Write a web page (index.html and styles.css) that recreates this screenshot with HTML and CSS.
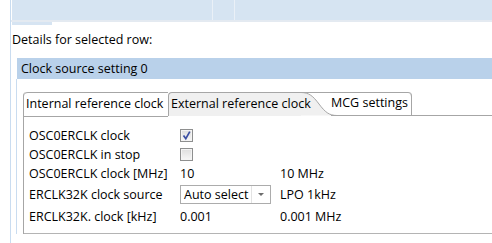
FILE: index.html
```html
<!DOCTYPE html>
<html lang="en">
<head>
    <meta charset="UTF-8">
    <title>Clock source setting</title>
    <link rel="stylesheet" href="styles.css">
</head>
<body>

    <div class="frame">
        <!-- Table rows above (cut off) -->
        <div class="grid-top">
            <div class="grid-cell wide"></div>
            <div class="grid-cell narrow"></div>
            <div class="grid-cell"></div>
        </div>
        <div class="grid-rule"></div>
        <div class="grid-thumb"></div>

        <div class="details-label">Details for selected row:</div>

        <div class="section">
            <div class="section-header">Clock source setting 0</div>

            <div class="section-body">
                <div class="tab-folder">
                    <!-- Tabs -->
                    <div class="tab-strip">
                        <div class="tab tab-first">Internal reference clock</div>
                        <div class="tab tab-hot"><span class="tab-text">External reference clock</span></div>
                        <svg class="tab-curve" width="36" height="24" viewBox="0 0 36 24">
                            <path d="M0 0.5 C8 0.5 12 4 18 12 C24 20 28 23.5 36 23.5 L0 23.5 Z" fill="#f0f0f0"/>
                            <path d="M0 0.5 C8 0.5 12 4 18 12 C24 20 28 23.5 36 23.5" fill="none" stroke="#a6a6a6"/>
                            <path d="M0 0.5 H36" fill="none" stroke="#a6a6a6"/>
                        </svg>
                        <div class="tab tab-last">MCG settings</div>
                        <div class="tab-fill"></div>
                    </div>

                    <!-- Tab content -->
                    <div class="tab-content">
                        <div class="prop-grid">
                            <div class="prop-label">OSC0ERCLK clock</div>
                            <div class="prop-value">
                                <span class="checkbox">
                                    <svg width="11" height="11" viewBox="0 0 11 11">
                                        <path d="M2.5 5.5 L4.8 8.6 L8.8 1.6" fill="none" stroke="#3b4fa3" stroke-width="1.7"/>
                                    </svg>
                                </span>
                            </div>
                            <div class="prop-unit"></div>

                            <div class="prop-label">OSC0ERCLK in stop</div>
                            <div class="prop-value"><span class="checkbox"></span></div>
                            <div class="prop-unit"></div>

                            <div class="prop-label">OSC0ERCLK clock [MHz]</div>
                            <div class="prop-value">10</div>
                            <div class="prop-unit">10 MHz</div>

                            <div class="prop-label">ERCLK32K clock source</div>
                            <div class="prop-value">
                                <div class="combo">
                                    <span class="combo-text">Auto select</span>
                                    <span class="combo-button"><span class="combo-arrow"></span></span>
                                </div>
                            </div>
                            <div class="prop-unit">LPO 1kHz</div>

                            <div class="prop-label">ERCLK32K. clock [kHz]</div>
                            <div class="prop-value">0.001</div>
                            <div class="prop-unit">0.001 MHz</div>
                        </div>
                    </div>
                </div>
            </div>
        </div>
    </div>

</body>
</html>
```

FILE: styles.css
```css
/* General Styling */
body {
    margin: 0;
    background-color: #ffffff;
    font-family: "Open Sans", "Noto Sans", sans-serif;
    font-size: 12.5px;
    color: #000000;
    overflow: hidden;
}

.frame {
    margin-left: 10px;
    height: 243px;
    border-left: 1px solid #c9dcf0;
}

/* Table remains at the top */
.grid-top {
    display: flex;
    height: 20px;
    margin-left: 1px;
    background-color: #d6e4f2;
}

.grid-cell {
    flex: 1;
}

.grid-cell.wide {
    flex: 0 0 200px;
    border-right: 1px solid #eaf0f7;
}

.grid-cell.narrow {
    flex: 0 0 21px;
    border-right: 1px solid #eaf0f7;
}

.grid-rule {
    height: 2px;
    background-color: #e4eaf1;
}

.grid-thumb {
    width: 40px;
    height: 3px;
    margin-left: 1px;
    background-color: #d6e4f2;
}

.details-label {
    height: 17px;
    line-height: 17px;
    margin-top: 6px;
    margin-left: 1px;
}

/* Section */
.section {
    margin-top: 10px;
    margin-left: 5px;
}

.section-header {
    height: 21px;
    line-height: 21px;
    margin-left: 1px;
    padding-left: 4px;
    background-color: #b9d1ea;
}

.section-body {
    border-left: 1px solid #c9dcf0;
    padding: 13px 0 0 6px;
}

/* Tabs */
.tab-folder {
    border-left: 1px solid #a6a6a6;
    border-top-left-radius: 4px;
}

.tab-strip {
    display: flex;
    height: 24px;
}

.tab {
    height: 23px;
    min-width: 0;
    line-height: 22px;
    border-top: 1px solid #a6a6a6;
    white-space: nowrap;
}

.tab-first {
    flex: 0 0 142px;
    padding-left: 2px;
    border-bottom: 1px solid #a6a6a6;
    border-top-left-radius: 4px;
}

.tab-hot {
    flex: 0 0 130px;
    padding-left: 2px;
    background-color: #f0f0f0;
    border-left: 1px solid #a6a6a6;
    border-top-left-radius: 4px;
}

/* keep the label above the curved edge */
.tab-text {
    position: relative;
    z-index: 1;
}

.tab-curve {
    flex: 0 0 36px;
    display: block;
}

.tab-last {
    flex: 0 0 80px;
    margin-left: -6px;
    border-top: none;
    border-bottom: 1px solid #a6a6a6;
    border-right: 1px solid #a6a6a6;
    border-top-right-radius: 4px;
    box-shadow: inset 0 1px 0 #a6a6a6;
}

.tab-fill {
    flex: 1;
    height: 23px;
    border-bottom: 1px solid #a6a6a6;
}

/* Content */
.tab-content {
    height: 118px;
    border-bottom: 1px solid #b4b4b4;
    padding: 10px 0 0 5px;
    box-sizing: border-box;
}

.prop-grid {
    display: grid;
    grid-template-columns: 151px 100px auto;
    grid-template-rows: 19px 19px 19px 23px 20px;
    align-items: center;
}

.prop-label,
.prop-value,
.prop-unit {
    white-space: nowrap;
}

/* Checkbox */
.checkbox {
    display: block;
    width: 11px;
    height: 11px;
    border: 1px solid #8e8f8f;
    background: linear-gradient(#dedede, #f7f7f7);
    box-shadow: inset 0 0 0 1px #f4f4f4;
}

.checkbox svg {
    display: block;
}

/* Combo box */
.combo {
    display: flex;
    width: 89px;
    height: 17px;
    border: 1px solid #acacac;
    background-color: #ffffff;
}

.combo-text {
    flex: 1;
    line-height: 17px;
    padding-left: 3px;
}

.combo-button {
    width: 18px;
    display: flex;
    align-items: center;
    justify-content: center;
    border-left: 1px solid #e3e3e3;
}

.combo-arrow {
    width: 0;
    height: 0;
    border-left: 3px solid transparent;
    border-right: 3px solid transparent;
    border-top: 3px solid #6d6d6d;
}
```
